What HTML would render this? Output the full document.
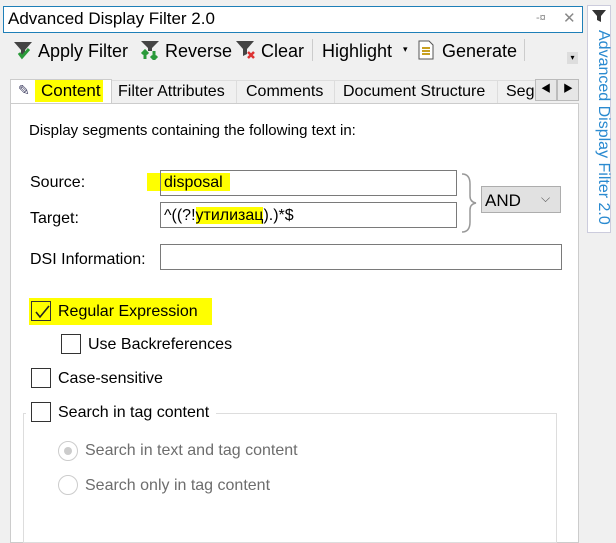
<!DOCTYPE html>
<html><head><meta charset="utf-8"><style>
*{box-sizing:border-box;margin:0;padding:0}
body{width:616px;height:535px;background:#f0f0f0;font-family:"Liberation Sans","Noto Sans CJK SC",sans-serif;font-size:16px;color:#000;position:relative;overflow:hidden}
.a{position:absolute;white-space:nowrap}
.hl{background:#ffff00}
.cb{position:absolute;width:20px;height:20px;border:1px solid #333;background:#fff}
.inp{position:absolute;border:1px solid #7a7a7a;background:#fff;height:26px}
</style></head><body>
<div class="a" style="left:3px;top:6px;width:580px;height:27px;background:#fff;border:1px solid #1e7fb8"></div>
<div class="a" style="left:8px;top:9px;font-size:17px">Advanced Display Filter 2.0</div>
<div class="a" style="left:536px;top:12px;font-size:11px;color:#888">-¤</div>
<div class="a" style="left:563px;top:9px;font-size:15px;color:#888">✕</div>
<svg class="a" style="left:13px;top:40px" width="20" height="20"><path d="M1 2h18l-7 8v4l-4 2v-6z" fill="#444"/><path d="M6 13l3 4 7-8" stroke="#2a9a3a" stroke-width="3" fill="none"/></svg>
<div class="a" style="left:38px;top:41px;font-size:18px">Apply Filter</div>
<svg class="a" style="left:140px;top:40px" width="22" height="20"><path d="M1 1h18l-7 7v3h-4v-3z" fill="#444"/><path d="M5 19v-7M2 14l3-3 3 3M14 11v7M11 16l3 3 3-3" stroke="#2a9a3a" stroke-width="3" fill="none"/></svg>
<div class="a" style="left:165px;top:41px;font-size:18px">Reverse</div>
<svg class="a" style="left:235px;top:40px" width="22" height="20"><path d="M1 1h18l-7 8v5l-4 2v-7z" fill="#444"/><path d="M13 12l6 6M19 12l-6 6" stroke="#d33" stroke-width="2.5"/></svg>
<div class="a" style="left:261px;top:41px;font-size:18px">Clear</div>
<div class="a" style="left:312px;top:39px;width:1px;height:22px;background:#ccc"></div>
<div class="a" style="left:322px;top:41px;font-size:18px">Highlight</div>
<div class="a" style="left:403px;top:44px;font-size:9px">▾</div>
<svg class="a" style="left:418px;top:40px" width="16" height="20"><path d="M1 1h10l4 4v14h-14z" fill="#fff" stroke="#555"/><path d="M4 8h8M4 11h8M4 14h8" stroke="#c8a020" stroke-width="2"/></svg>
<div class="a" style="left:442px;top:41px;font-size:18px">Generate</div>
<div class="a" style="left:524px;top:39px;width:1px;height:22px;background:#ccc"></div>
<div class="a" style="left:567px;top:52px;width:11px;height:12px;background:#ddd;font-size:8px;text-align:center;line-height:12px">▾</div>
<div class="a" style="left:10px;top:79px;width:102px;height:25px;background:#fff;border:1px solid #ccc;border-bottom:none"></div>
<div class="a" style="left:18px;top:82px;font-size:14px;color:#446">✎</div>
<div class="a hl" style="left:35px;top:80px;width:68px;height:22px"></div>
<div class="a" style="left:41px;top:81px;font-size:17px">Content</div>
<div class="a" style="left:112px;top:80px;width:424px;height:23px;background:#f0f0f0;border-top:1px solid #ddd"></div>
<div class="a" style="left:118px;top:83px;font-size:16px">Filter Attributes</div>
<div class="a" style="left:236px;top:80px;width:1px;height:23px;background:#ddd"></div>
<div class="a" style="left:246px;top:83px;font-size:16px">Comments</div>
<div class="a" style="left:334px;top:80px;width:1px;height:23px;background:#ddd"></div>
<div class="a" style="left:343px;top:83px;font-size:16px">Document Structure</div>
<div class="a" style="left:497px;top:80px;width:1px;height:23px;background:#ddd"></div>
<div class="a" style="left:506px;top:83px;font-size:16px;width:28px;overflow:hidden">Seg</div>
<div class="a" style="left:535px;top:79px;width:22px;height:22px;background:#e6e6e6;border:1px solid #bbb;font-size:10px;text-align:center;line-height:20px">◀</div>
<div class="a" style="left:557px;top:79px;width:22px;height:22px;background:#e6e6e6;border:1px solid #bbb;font-size:10px;text-align:center;line-height:20px">▶</div>
<div class="a" style="left:10px;top:103px;width:569px;height:440px;background:#fff;border:1px solid #ccc"></div>
<div class="a" style="left:29px;top:122px;font-size:15px">Display segments containing the following text in:</div>
<div class="a" style="left:30px;top:174px;font-size:16px">Source:</div>
<div class="a" style="left:30px;top:210px;font-size:16px">Target:</div>
<div class="a" style="left:30px;top:251px;font-size:16px">DSI Information:</div>
<div class="a hl" style="left:147px;top:173px;width:83px;height:18px"></div>
<div class="inp" style="left:160px;top:170px;width:297px;background:transparent"></div>
<div class="a" style="left:164px;top:174px;font-size:16px">disposal</div>
<div class="inp" style="left:160px;top:202px;width:297px"></div>
<div class="a" style="left:164px;top:207px;font-size:16px">^((?!<span class="hl">утилизац</span>).)*$</div>
<div class="inp" style="left:160px;top:244px;width:402px"></div>
<svg class="a" style="left:458px;top:172px" width="20" height="62"><path d="M4 2q8 0 8 10v12q0 6 6 7q-6 1-6 7v12q0 10-8 10" stroke="#999" stroke-width="1.5" fill="none"/></svg>
<div class="a" style="left:481px;top:186px;width:80px;height:27px;background:#e1e1e1;border:1px solid #adadad"></div>
<div class="a" style="left:485px;top:191px;font-size:17px">AND</div>
<div class="a" style="left:541px;top:191px;font-size:12px;color:#555">⌵</div>
<div class="a hl" style="left:29px;top:298px;width:183px;height:27px"></div>
<div class="cb" style="left:31px;top:301px;background:transparent"></div>
<svg class="a" style="left:33px;top:303px" width="18" height="18"><path d="M3 9l4 5 9-11" stroke="#222" stroke-width="1.6" fill="none"/></svg>
<div class="a" style="left:58px;top:303px;font-size:16px">Regular Expression</div>
<div class="cb" style="left:61px;top:334px"></div>
<div class="a" style="left:88px;top:336px;font-size:16px">Use Backreferences</div>
<div class="cb" style="left:31px;top:368px"></div>
<div class="a" style="left:58px;top:370px;font-size:16px">Case-sensitive</div>
<div class="a" style="left:23px;top:413px;width:534px;height:130px;border:1px solid #ddd"></div>
<div class="a" style="left:26px;top:400px;width:190px;height:26px;background:#fff"></div>
<div class="cb" style="left:31px;top:402px"></div>
<div class="a" style="left:58px;top:404px;font-size:16px">Search in tag content</div>
<div class="a" style="left:58px;top:441px;width:20px;height:20px;border:1px solid #ccc;border-radius:50%"></div>
<div class="a" style="left:64px;top:447px;width:8px;height:8px;background:#ccc;border-radius:50%"></div>
<div class="a" style="left:85px;top:442px;font-size:16px;color:#6d6d6d">Search in text and tag content</div>
<div class="a" style="left:58px;top:475px;width:20px;height:20px;border:1px solid #ccc;border-radius:50%"></div>
<div class="a" style="left:85px;top:477px;font-size:16px;color:#6d6d6d">Search only in tag content</div>
<div class="a" style="left:587px;top:5px;width:24px;height:228px;background:#fff;border:1px solid #ccd"></div>
<svg class="a" style="left:591px;top:8px" width="16" height="16"><path d="M1 2h14l-5 6v6l-4-2v-4z" fill="#333"/></svg>
<div class="a" style="left:588px;top:30px;width:24px;height:200px"><div style="position:absolute;left:24px;top:0;transform:rotate(90deg);transform-origin:0 0;font-size:16px;color:#2a8ad0;white-space:nowrap">Advanced Display Filter 2.0</div></div>
</body></html>
